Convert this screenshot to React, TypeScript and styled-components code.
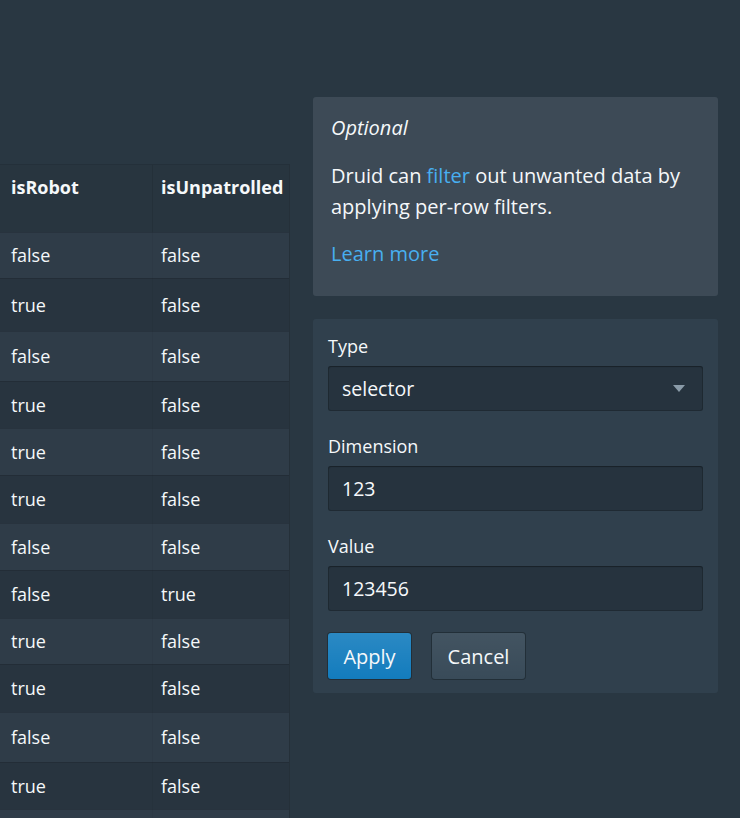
import React from "react";
import styled, { createGlobalStyle } from "styled-components";

const GlobalStyle = createGlobalStyle`
  html, body {
    margin: 0;
    padding: 0;
    background: #293742;
    color: #f5f8fa;
    font-family: "Open Sans", "Noto Sans", sans-serif;
    font-size: 18px;
  }
  #root { width: 740px; height: 818px; overflow: hidden; }
`;

const Page = styled.div`
  display: flex;
  align-items: flex-start;
  width: 740px;
  height: 818px;
  overflow: hidden;
`;

const TableArea = styled.div`
  width: 289px;
  margin-top: 164px;
  border-right: 1px solid #253039;
  flex-shrink: 0;
  min-height: 654px;
`;

const HeaderRow = styled.div`
  display: grid;
  grid-template-columns: 153px 136px;
  height: 68px;
  background: #28353f;
  box-shadow: inset 0 1px 0 #24303a;
`;

const HeaderCell = styled.div<{ $first?: boolean }>`
  padding: 11px 0 0 ${(p) => (p.$first ? "11px" : "8px")};
  font-weight: 700;
  line-height: 24px;
  white-space: nowrap;
  overflow: hidden;
  border-right: ${(p) => (p.$first ? "1px solid #243039" : "none")};
`;

const Row = styled.div<{ $light: boolean }>`
  display: grid;
  grid-template-columns: 153px 136px;
  background: ${(p) => (p.$light ? "#2f3c48" : "#28343f")};
  box-shadow: inset 0 1px 0 rgba(16, 22, 26, 0.22);
`;

const Cell = styled.div<{ $first?: boolean }>`
  display: flex;
  align-items: center;
  padding-left: ${(p) => (p.$first ? "11px" : "8px")};
  border-right: ${(p) => (p.$first ? "1px solid rgba(16,22,26,0.05)" : "none")};
`;

const Side = styled.div`
  width: 405px;
  margin-left: 23px;
  margin-top: 97px;
  display: flex;
  flex-direction: column;
  gap: 23px;
`;

const Callout = styled.div`
  background: #3d4a56;
  border-radius: 3px;
  padding: 15px 18px 27px;
  font-size: 20px;
`;

const CalloutTitle = styled.div`
  font-style: italic;
  line-height: 32px;
  margin-bottom: 16px;
`;

const CalloutText = styled.p`
  margin: 0 0 16px;
  line-height: 31px;
`;

const Link = styled.a`
  color: #48aff0;
  text-decoration: none;
  line-height: 31px;
`;

const FormCard = styled.div`
  background: #30404d;
  border-radius: 3px;
  padding: 15px 15px 14px;
`;

const FormGroup = styled.div<{ $last?: boolean }>`
  margin-bottom: ${(p) => (p.$last ? "22px" : "23px")};
`;

const Label = styled.div`
  line-height: 24px;
  margin-bottom: 8px;
`;

const InputBox = styled.div`
  position: relative;
  height: 45px;
  box-sizing: border-box;
  background: #26333e;
  border-radius: 3px;
  box-shadow: inset 0 0 0 1px rgba(16, 22, 26, 0.3), inset 0 1px 1px rgba(16, 22, 26, 0.4);
  display: flex;
  align-items: center;
  padding: 0 14px;
  font-size: 19.5px;
`;

const Caret = styled.svg`
  position: absolute;
  right: 18px;
  top: 19px;
`;

const Buttons = styled.div`
  display: flex;
  gap: 21px;
`;

const Button = styled.button<{ $primary?: boolean }>`
  height: 46px;
  box-sizing: border-box;
  border: none;
  border-radius: 3px;
  padding: 0 14px;
  font-family: inherit;
  font-size: 20px;
  color: #f5f8fa;
  background-color: ${(p) => (p.$primary ? "#137cbd" : "#394b59")};
  background-image: ${(p) =>
    p.$primary
      ? "linear-gradient(to bottom, rgba(255,255,255,0.1), rgba(255,255,255,0))"
      : "linear-gradient(to bottom, rgba(255,255,255,0.05), rgba(255,255,255,0))"};
  box-shadow: 0 0 0 1px rgba(16, 22, 26, 0.4);
  min-width: ${(p) => (p.$primary ? "83px" : "93px")};
`;

const rows: [string, string, number][] = [
  ["false", "false", 46],
  ["true", "false", 53],
  ["false", "false", 50],
  ["true", "false", 47],
  ["true", "false", 47],
  ["true", "false", 48],
  ["false", "false", 47],
  ["false", "true", 48],
  ["true", "false", 46],
  ["true", "false", 48],
  ["false", "false", 50],
  ["true", "false", 47],
  ["", "", 47],
];

export default function App() {
  return (
    <>
      <GlobalStyle />
      <Page>
        <TableArea>
          <HeaderRow>
            <HeaderCell $first>isRobot</HeaderCell>
            <HeaderCell>isUnpatrolled</HeaderCell>
          </HeaderRow>
          {rows.map(([a, b, h], i) => (
            <Row key={i} $light={i % 2 === 0} style={{ height: h }}>
              <Cell $first>{a}</Cell>
              <Cell>{b}</Cell>
            </Row>
          ))}
        </TableArea>
        <Side>
          <Callout>
            <CalloutTitle>Optional</CalloutTitle>
            <CalloutText>
              Druid can <Link href="#">filter</Link> out unwanted data by applying per-row filters.
            </CalloutText>
            <Link href="#">Learn more</Link>
          </Callout>
          <FormCard>
            <FormGroup>
              <Label>Type</Label>
              <InputBox>
                selector
                <Caret width="12" height="7" viewBox="0 0 12 7">
                  <path d="M0 0 L12 0 L6 7 Z" fill="#8a9ba8" />
                </Caret>
              </InputBox>
            </FormGroup>
            <FormGroup>
              <Label>Dimension</Label>
              <InputBox>123</InputBox>
            </FormGroup>
            <FormGroup $last>
              <Label>Value</Label>
              <InputBox>123456</InputBox>
            </FormGroup>
            <Buttons>
              <Button $primary>Apply</Button>
              <Button>Cancel</Button>
            </Buttons>
          </FormCard>
        </Side>
      </Page>
    </>
  );
}
